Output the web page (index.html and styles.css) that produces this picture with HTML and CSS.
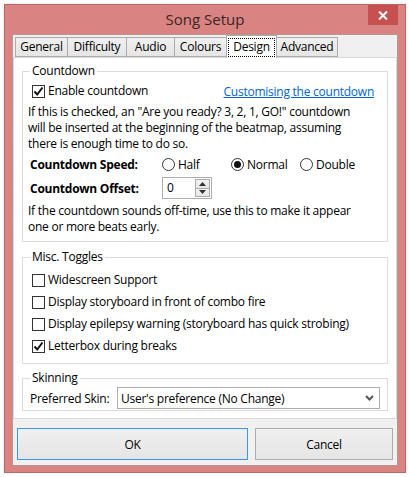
FILE: index.html
```html
<!DOCTYPE html>
<html>
<head>
<meta charset="utf-8">
<link rel="stylesheet" href="styles.css">
</head>
<body>
<div class="window">
  <div class="titlebar">
    <span></span>
    <div class="title">Song Setup</div>
    <div class="close">
      <svg width="10" height="9" viewBox="0 0 10 9"><path d="M1 0.5 L9 8.5 M9 0.5 L1 8.5" stroke="#fff" stroke-width="2" fill="none"/></svg>
    </div>
  </div>
  <div class="client">
    <div class="tabs">
      <div class="tab w-general">General</div>
      <div class="tab w-difficulty">Difficulty</div>
      <div class="tab w-audio">Audio</div>
      <div class="tab w-colours">Colours</div>
      <div class="tab active w-design"><span class="focus">Design</span></div>
      <div class="tab w-advanced">Advanced</div>
    </div>
    <div class="page">
      <fieldset class="group g-countdown">
        <legend>Countdown</legend>
        <div class="row first">
          <label class="check"><span class="box"><svg width="11" height="11" viewBox="0 0 11 11"><path d="M1.5 5.5 L4.2 8.5 L9.5 1.5" stroke="#111" stroke-width="2" fill="none"/></svg></span>Enable countdown</label>
          <a class="link" href="#">Customising the countdown</a>
        </div>
        <p class="desc d1">If this is checked, an "Are you ready? 3, 2, 1, GO!" countdown<br>will be inserted at the beginning of the beatmap, assuming<br>there is enough time to do so.</p>
        <div class="row speed">
          <span class="bold">Countdown Speed:</span>
          <label class="radio"><span class="circle"></span>Half</label>
          <label class="radio"><span class="circle on"></span>Normal</label>
          <label class="radio"><span class="circle"></span>Double</label>
        </div>
        <div class="row offset">
          <span class="bold">Countdown Offset:</span>
          <div class="numeric">
            <span class="num-val">0</span>
            <div class="spin">
              <span class="spin-btn"><svg width="7" height="4" viewBox="0 0 7 4"><path d="M0 4 L3.5 0 L7 4 Z" fill="#333"/></svg></span>
              <span class="spin-btn"><svg width="7" height="4" viewBox="0 0 7 4"><path d="M0 0 L3.5 4 L7 0 Z" fill="#333"/></svg></span>
            </div>
          </div>
        </div>
        <p class="desc d2">If the countdown sounds off-time, use this to make it appear<br>one or more beats early.</p>
      </fieldset>

      <fieldset class="group g-misc">
        <legend>Misc. Toggles</legend>
        <label class="check line"><span class="box"></span>Widescreen Support</label>
        <label class="check line"><span class="box"></span>Display storyboard in front of combo fire</label>
        <label class="check line"><span class="box"></span>Display epilepsy warning (storyboard has quick strobing)</label>
        <label class="check line"><span class="box"><svg width="11" height="11" viewBox="0 0 11 11"><path d="M1.5 5.5 L4.2 8.5 L9.5 1.5" stroke="#111" stroke-width="2" fill="none"/></svg></span>Letterbox during breaks</label>
      </fieldset>

      <fieldset class="group g-skin">
        <legend>Skinning</legend>
        <div class="row skin">
          <span class="skin-label">Preferred Skin:</span>
          <div class="select">
            <span>User's preference (No Change)</span>
            <svg width="9" height="6" viewBox="0 0 9 6"><path d="M1 1 L4.5 4.5 L8 1" stroke="#555" stroke-width="2" fill="none"/></svg>
          </div>
        </div>
      </fieldset>
    </div>
    <div class="buttons">
      <div class="btn ok">OK</div>
      <div class="btn cancel">Cancel</div>
    </div>
  </div>
</div>
</body>
</html>
```

FILE: styles.css
```css
* { box-sizing: border-box; }
body {
  margin: 0;
  background: #fff;
  font-family: "Open Sans", "Noto Sans", sans-serif;
  font-size: 12px;
  letter-spacing: -0.25px;
  color: #000;
}
.window {
  width: 402px;
  height: 469px;
  margin: 4px 0 0 4px;
  background: #d98383;
  border: 1px solid #b96868;
  padding: 0 7px;
  box-shadow: 0 0 3px rgba(0,0,0,0.15);
}
.titlebar {
  height: 29px;
  display: grid;
  grid-template-columns: 1fr auto 1fr;
}
.title {
  align-self: center;
  font-size: 15px;
  letter-spacing: 0;
  color: #3a2626;
  line-height: 20px;
  padding-bottom: 1px;
}
.close {
  justify-self: end;
  width: 30px;
  height: 20px;
  background: #c75050;
  display: flex;
  align-items: center;
  justify-content: center;
}
.client {
  width: 386px;
  height: 432px;
  background: #f0f0f0;
  border: 1px solid #b79595;
  display: flex;
  flex-direction: column;
}
.tabs {
  display: flex;
  height: 23px;
  padding-left: 2px;
  margin-bottom: -1px;
  position: relative;
  z-index: 1;
}
.tab {
  margin-top: 2px;
  height: 20px;
  border: 1px solid #acacac;
  border-right: none;
  background: linear-gradient(#f0f0f0, #e5e5e5);
  display: flex;
  align-items: center;
  justify-content: center;
  line-height: 16px;
}
.w-general { width: 52px; }
.w-difficulty { width: 59px; }
.w-audio { width: 48px; }
.w-colours { width: 52px; }
.w-design { width: 51px; }
.w-advanced { width: 61px; border-right: 1px solid #acacac; }
.tab.active {
  margin-top: 0;
  height: 23px;
  background: #fff;
  border-bottom: none;
  border-right: 1px solid #acacac;
  padding: 2px 1px 1px;
  align-items: stretch;
}
.tab.active + .tab { border-left: none; }
.focus {
  flex: 1;
  border: 1px dotted #000;
  display: flex;
  align-items: center;
  justify-content: center;
  padding-bottom: 2px;
}
.page {
  height: 362px;
  background: #fff;
  border: 1px solid #d9d9d9;
  padding: 0 8px;
}
.group {
  margin: 0;
  border: 1px solid #dcdcdc;
  padding: 0;
  min-width: 0;
}
.group legend {
  margin-left: 7px;
  padding: 0 2px;
  line-height: 16px;
}
.g-countdown { margin-top: 5px; height: 179px; padding: 4px 0 0; }
.g-misc { margin-top: 7px; height: 115px; padding: 4px 0 0; }
.g-skin { margin-top: 6px; height: 41px; padding: 1px 0 0; }

.row { display: flex; align-items: center; }
.row.first { height: 16px; justify-content: space-between; padding-right: 13px; }
.check { display: flex; align-items: center; padding-left: 9px; line-height: 16px; }
.check.line { height: 22px; }
.box {
  width: 13px;
  height: 13px;
  border: 1px solid #333;
  background: #fff;
  margin-right: 3px;
  display: flex;
  align-items: center;
  justify-content: center;
}
.link { color: #0066cc; text-decoration: underline; }
.desc { margin: 0; padding-left: 5px; line-height: 16px; }
.d1 { margin-top: 5px; }
.d2 { margin-top: 4px; }
.speed { height: 20px; margin-top: 2px; }
.offset { height: 22px; margin-top: 3px; }
.bold { font-weight: bold; width: 139px; padding-left: 7px; }
.radio { width: 69px; display: flex; align-items: center; }
.circle {
  width: 13px;
  height: 13px;
  border: 1px solid #333;
  border-radius: 50%;
  margin-right: 3px;
  display: flex;
  align-items: center;
  justify-content: center;
}
.circle.on::after {
  content: "";
  width: 7px;
  height: 7px;
  border-radius: 50%;
  background: #111;
}
.numeric {
  width: 50px;
  height: 22px;
  border: 1px solid #abadb3;
  display: flex;
  padding: 1px;
}
.num-val { flex: 1; padding-left: 3px; line-height: 18px; }
.spin { width: 15px; display: flex; flex-direction: column; }
.spin-btn {
  flex: 1;
  border: 1px solid #acacac;
  background: linear-gradient(#f2f2f2, #e6e6e6);
  display: flex;
  align-items: center;
  justify-content: center;
}
.spin-btn + .spin-btn { border-top: none; }
.skin { height: 22px; }
.skin-label { width: 94px; padding-left: 7px; }
.select {
  width: 263px;
  height: 22px;
  border: 1px solid #acacac;
  display: flex;
  align-items: center;
  justify-content: space-between;
  padding: 0 5px 0 3px;
}
.buttons {
  display: flex;
  gap: 7px;
  padding: 9px 4px 0;
}
.btn {
  height: 32px;
  border: 1px solid #acacac;
  background: linear-gradient(#f0f0f0, #e5e5e5);
  display: flex;
  align-items: center;
  justify-content: center;
}
.ok { width: 231px; border-color: #3399ff; }
.cancel { width: 138px; }
```
